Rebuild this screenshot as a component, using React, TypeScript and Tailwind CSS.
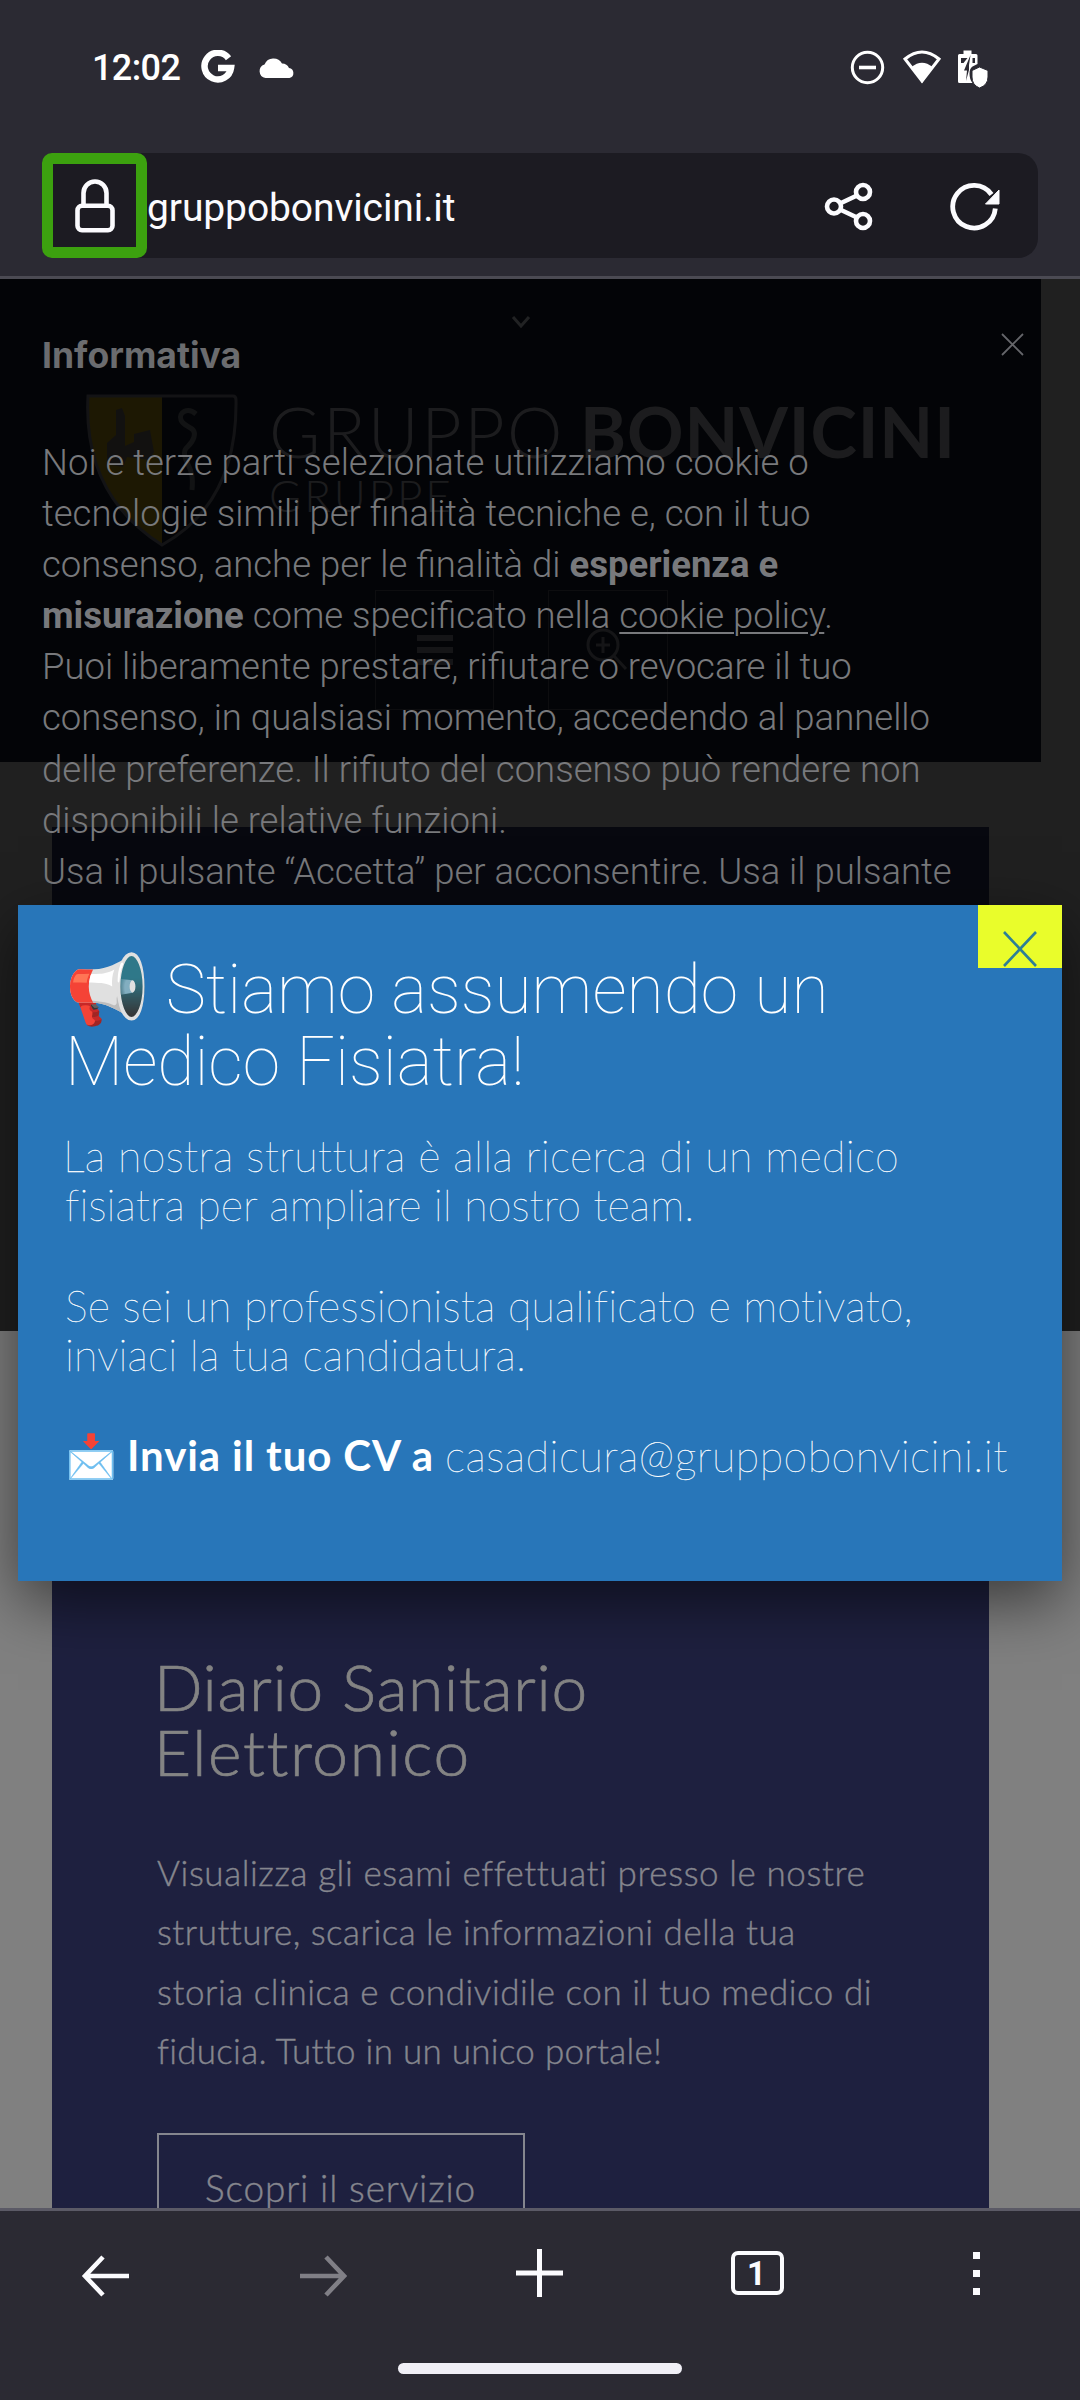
import type { ReactNode } from 'react';

function Line({ className = '', children }: { className?: string; children: ReactNode }) {
  return <span className={`block whitespace-nowrap ${className}`}>{children}</span>;
}

function StatusBar() {
  return (
    <div className="flex h-[153px] items-start pt-[47px] pr-[91px] pl-[92px] text-white">
      <span className="h-[40px] w-[90px] pt-px whitespace-nowrap font-['Roboto',sans-serif] text-[36px] leading-[40px] font-medium tracking-[-0.6px]">
        12:02
      </span>
      <svg className="mt-[3px] ml-[18px]" width="36" height="36" viewBox="0 0 36 36" fill="none" stroke="#fff" strokeWidth="6.5">
        <path d="M28.5 8.2A13.3 13.3 0 1 0 31 18H18" />
      </svg>
      <svg className="mt-[10px] ml-[22px]" width="37" height="22" viewBox="0 0 36 22" fill="#fff">
        <path d="M7 21a7 7 0 0 1-1-13.600A9.800 9.800 0 0 1 23.500 6.500 7.500 7.500 0 0 1 30.500 11 5.100 5.100 0 0 1 31 21Z" />
      </svg>
      <div className="ml-auto flex">
        <svg className="mt-[3px]" width="35" height="35" viewBox="0 0 35 35" fill="none" stroke="#fff">
          <circle cx="17.500" cy="17.500" r="15.200" strokeWidth="3" />
          <path d="M9 17.500h17" strokeWidth="3.600" />
        </svg>
        <svg className="mt-[2px] ml-[17px]" width="40" height="36" viewBox="0 0 40 36">
          <path d="M3 10Q20-4 37 10L20 32Z" fill="none" stroke="#fff" strokeWidth="3" />
          <path d="M9.500 18Q20 9.500 30.500 18L20 34Z" fill="#fff" />
        </svg>
        <svg className="mt-[2px] ml-[14px]" width="33" height="40" viewBox="0 0 33 40">
          <path d="M7.500 1.500h8v3.500h4.500q1.500 0 1.500 1.500V15l-5 2.500q-3 2-3 7 0 6 3 9.500H3.500Q2 34 2 32.500V6.500Q2 5 3.500 5h4Z" fill="#fff" />
          <path d="M5 9h6.500L7.500 14H5ZM16.500 9H19v5h-2.500ZM14.500 6 8 21.500h3L10 32l3-11V16Z" fill="#2b2a33" />
          <path d="m23.500 18 8.500 3.500V28q0 8-8.500 11-7.500-3-7.500-11v-6.500Z" fill="#fff" stroke="#2b2a33" strokeWidth="1" />
        </svg>
      </div>
    </div>
  );
}

function AddressBar() {
  return (
    <div className="mx-[42px] flex h-[105px] w-[996px] items-center rounded-[20px] bg-[#1c1b22] text-[#fbfbfe]">
      <div className="flex h-[105px] w-[105px] items-center justify-center rounded-[10px] border-[11px] border-[#3ca10f]">
        <svg width="40" height="54" viewBox="0 0 40 54" fill="none" stroke="#fbfbfe" strokeWidth="4.600">
          <rect x="2.500" y="26.800" width="35" height="24.500" rx="4.500" />
          <path d="M8.500 26.500V14a11.500 11.500 0 0 1 23 0v12.500" />
        </svg>
      </div>
      <span className="pt-[4px] font-['Roboto',sans-serif] text-[39px] leading-[50px] tracking-[-0.1px]">gruppobonvicini.it</span>
      <svg className="mr-[75px] ml-auto" width="50" height="50" viewBox="0 0 50 50" fill="none" stroke="#fbfbfe" strokeWidth="4.600">
        <circle cx="11" cy="25.500" r="7" />
        <circle cx="40" cy="11" r="7" />
        <circle cx="40" cy="40" r="7" />
        <path d="m17 22.500 17-8M17 28.500l17 8" />
      </svg>
      <svg className="mr-[36px]" width="54" height="50" viewBox="0 0 54 50" fill="none" stroke="#fbfbfe" strokeWidth="4.800">
        <path d="M47.300 27.500A21.300 21.300 0 1 1 43.500 13.500" />
        <path d="M51 9v14H37.500Z" fill="#fbfbfe" stroke="#fbfbfe" strokeWidth="1" strokeLinejoin="round" />
      </svg>
    </div>
  );
}

function SiteHeader() {
  return (
    <div className="flex h-[483px] w-[1041px] flex-col bg-[#0d111c]">
      <svg className="mt-[36px] ml-[511px]" width="20" height="14" viewBox="0 0 20 14" fill="none" stroke="#85878c" strokeWidth="3">
        <path d="m2 2 8 9 8-9" />
      </svg>
      <div className="mt-[65px] ml-[86px] flex h-[154px]">
        <svg width="152" height="154" viewBox="0 0 152 154" fill="none">
          <path d="M2 2h74v149C30 122-2 76 2 2Z" fill="#73600f" />
          <path d="M2 2h145q3 0 3 4C151 72 128 122 76 151 30 122-2 76 2 2Z" stroke="#4c4e55" strokeWidth="3" />
          <path d="M21 66V49l9-8V16l6-2 3 8v30l9-4V40l16-4 4 22-5 8-22-3-4 10-12-2Z" fill="#4a4440" />
          <path d="M110 20c-8-7-18-2-15 6s16 6 13 17-12 9-9 20 9 12 7 33" stroke="#4a4c50" strokeWidth="5" />
        </svg>
        <div className="ml-[31px] pt-[2px] text-[#707277]">
          <div className="flex h-[70px] items-center gap-[15px] whitespace-nowrap font-['Lato',sans-serif] text-[70px] leading-[70px]">
            <span className="tracking-[2.500px] font-light">GRUPPO</span>
            <span className="tracking-[0.900px] font-bold">BONVICINI</span>
          </div>
          <div className="mt-[7px] font-['Lato',sans-serif] text-[44px] leading-[44px] tracking-[2.900px] font-light">GRUPPE</div>
        </div>
      </div>
      <div className="mt-[42px] ml-[375px] flex gap-[54px]">
        <div className="flex h-[120px] w-[119px] justify-center border border-[#34373f] pt-[44px]">
          <div className="flex flex-col gap-[6px]">
            <div className="h-[6px] w-[36px] bg-[#54565b]" />
            <div className="h-[6px] w-[36px] bg-[#54565b]" />
            <div className="h-[6px] w-[36px] bg-[#54565b]" />
          </div>
        </div>
        <div className="flex h-[120px] w-[120px] border border-[#34373f] pt-[36px] pl-[36px]">
          <svg width="44" height="44" viewBox="0 0 44 44" fill="none" stroke="#54565b" strokeWidth="3">
            <circle cx="18" cy="18" r="15" />
            <path d="M18 10v16M11 18h14M29 29l12 13" />
          </svg>
        </div>
      </div>
    </div>
  );
}

function DiaryCard() {
  return (
    <div className="mt-[65px] ml-[52px] h-[1500px] w-[937px] bg-[#1e203f] pt-[827px] pl-[105px] font-['Lato',sans-serif] font-light">
      <h2 className="text-[64px] leading-[65px] text-[#848484] [-webkit-text-stroke:0.7px_#848484]">
        <Line className="-ml-[3px] tracking-[0.700px]">Diario Sanitario</Line>
        <Line className="-ml-[3px] tracking-[1.600px]">Elettronico</Line>
      </h2>
      <div className="mt-[59px] text-[35px] leading-[59.300px] text-[#85868e] [-webkit-text-stroke:0.4px_#85868e]">
        <Line className="tracking-[0.580px]">Visualizza gli esami effettuati presso le nostre</Line>
        <Line className="tracking-[0.480px]">strutture, scarica le informazioni della tua</Line>
        <Line className="tracking-[0.550px]">storia clinica e condividile con il tuo medico di</Line>
        <Line className="tracking-[0.280px]">fiducia. Tutto in un unico portale!</Line>
      </div>
      <div className="mt-[53px] h-[112px] w-[368px] border-2 border-[#85868e] pt-[31px] pl-[46px] text-[37px] leading-[44px] text-[#85868e] [-webkit-text-stroke:0.4px_#85868e]">
        <Line className="tracking-[0.850px]">Scopri il servizio</Line>
      </div>
    </div>
  );
}

function CookieNotice() {
  return (
    <div className="absolute top-0 left-0 h-[1052px] w-full bg-black/75 pt-[56px] pl-[42px] text-[#78797c]">
      <svg className="absolute top-[54px] left-[1001px]" width="23" height="23" viewBox="0 0 23 23" stroke="#65666a" strokeWidth="1.800">
        <path d="m1 1 21 21M22 1 1 22" />
      </svg>
      <div className="font-['Inter',sans-serif] text-[35.500px] leading-[42px] font-bold text-[#6b6c6f]">Informativa</div>
      <div className="mt-[60px] font-['Roboto',sans-serif] text-[36.500px] leading-[51.100px] font-light">
        <Line>Noi e terze parti selezionate utilizziamo cookie o</Line>
        <Line>tecnologie simili per finalità tecniche e, con il tuo</Line>
        <Line>
          consenso, anche per le finalità di <b className="font-bold">esperienza e</b>
        </Line>
        <Line>
          <b className="font-bold">misurazione</b> come specificato nella{' '}
          <span className="underline decoration-2 underline-offset-[4px]">cookie policy</span>.
        </Line>
        <Line>Puoi liberamente prestare, rifiutare o revocare il tuo</Line>
        <Line>consenso, in qualsiasi momento, accedendo al pannello</Line>
        <Line>delle preferenze. Il rifiuto del consenso può rendere non</Line>
        <Line>disponibili le relative funzioni.</Line>
        <Line>Usa il pulsante “Accetta” per acconsentire. Usa il pulsante</Line>
      </div>
    </div>
  );
}

function JobPopup() {
  return (
    <div className="absolute top-[626px] left-[18px] h-[676px] w-[1044px] bg-[#2876b9] pt-[49px] pl-[47px] text-white shadow-[0_20px_60px_rgba(0,0,0,0.55)]">
      <div className="absolute top-0 right-0 flex h-[63px] w-[84px] justify-center bg-[#e9fd2b] pt-[26px]">
        <svg width="34" height="36" viewBox="0 0 34 36" stroke="#2e7f96" strokeWidth="2.600">
          <path d="m1 1 32 34M33 1 1 35" />
        </svg>
      </div>
      <h1 className="font-['Roboto','Noto_Color_Emoji',sans-serif] text-[67.800px] leading-[72px] font-thin">
        <Line>📢 Stiamo assumendo un</Line>
        <Line>Medico Fisiatra!</Line>
      </h1>
      <div className="mt-[33px] font-['Lato','Noto_Color_Emoji',sans-serif] text-[43px] leading-[49px] font-thin [-webkit-text-stroke:0.3px_#ffffff]">
        <Line className="-ml-[2px] tracking-[0.320px]">La nostra struttura è alla ricerca di un medico</Line>
        <Line className="tracking-[0.100px]">fisiatra per ampliare il nostro team.</Line>
        <Line className="mt-[52px] tracking-[0.180px]">Se sei un professionista qualificato e motivato,</Line>
        <Line className="tracking-[0.160px]">inviaci la tua candidatura.</Line>
        <div className="mt-[52px] flex whitespace-nowrap">
          <span className="w-[62px] text-[42px]">📩</span>
          <b className="w-[318px] text-[42px] tracking-[0.900px] font-bold [-webkit-text-stroke:0px]">Invia il tuo CV a</b>
          <span className="tracking-[0.480px]">casadicura@gruppobonvicini.it</span>
        </div>
      </div>
    </div>
  );
}

function BottomBar() {
  return (
    <div className="flex h-[192px] flex-col items-center border-t-[3px] border-[#5b5a66] bg-[#2b2a33]">
      <div className="flex h-[152px] w-full pt-[36px] pl-[81px]">
        <svg className="mt-[8px]" width="48" height="42" viewBox="0 0 48 42" fill="none" stroke="#fbfbfe" strokeWidth="4.600">
          <path d="M48 21H4M22 2 4 21l18 19" />
        </svg>
        <svg className="mt-[8px] ml-[170px]" width="48" height="42" viewBox="0 0 48 42" fill="none" stroke="#807f86" strokeWidth="4.600">
          <path d="M1 21h44M27 2l18 19-18 19" />
        </svg>
        <svg className="mt-[2px] ml-[168px]" width="50" height="48" viewBox="0 0 50 48" stroke="#fbfbfe" strokeWidth="5">
          <path d="M1 24h47M24.500 0v48" />
        </svg>
        <div className="mt-[4px] ml-[166px] flex h-[44px] w-[53px] items-center justify-center rounded-[7px] border-[4.500px] border-[#fbfbfe] pr-[2px] font-['Roboto',sans-serif] text-[33px] leading-[35px] font-bold text-[#fbfbfe]">
          1
        </div>
        <div className="mt-[5px] ml-[189px] flex flex-col gap-[11px]">
          <div className="size-[7px] bg-[#fbfbfe]" />
          <div className="size-[7px] bg-[#fbfbfe]" />
          <div className="size-[7px] bg-[#fbfbfe]" />
        </div>
      </div>
      <div className="h-[11px] w-[284px] rounded-full bg-[#f0eff6]" />
    </div>
  );
}

export default function App() {
  return (
    <div className="h-[2400px] w-[1080px] overflow-hidden bg-[#2b2a33]">
      <div className="h-[279px] border-b-[3px] border-[#4b4a53]">
        <StatusBar />
        <AddressBar />
      </div>
      <main className="relative h-[1929px] overflow-hidden bg-[#808080]">
        <SiteHeader />
        <DiaryCard />
        <CookieNotice />
        <JobPopup />
      </main>
      <BottomBar />
    </div>
  );
}
